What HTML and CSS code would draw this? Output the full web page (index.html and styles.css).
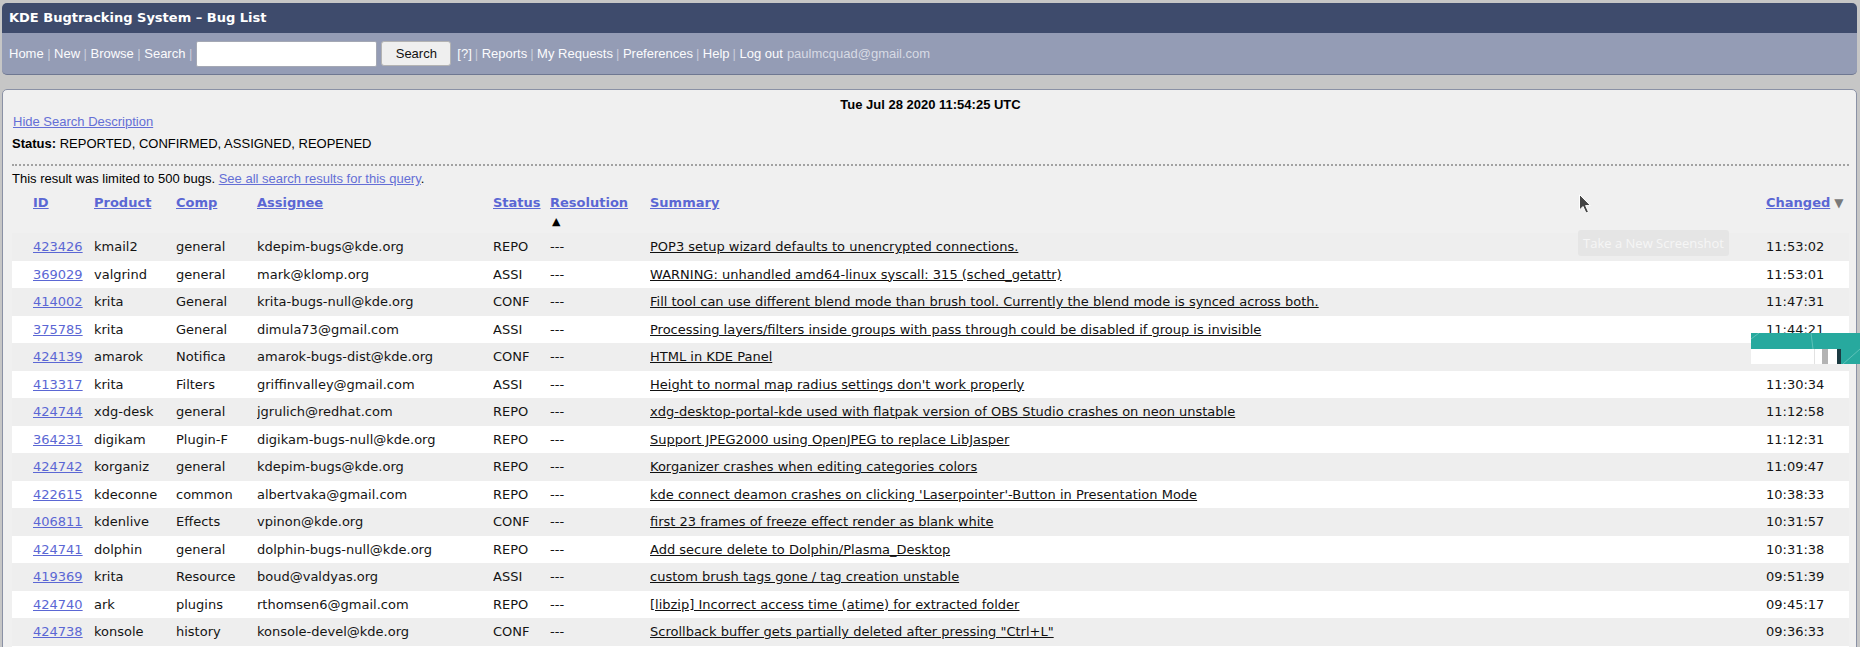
FILE: index.html
```html
<!DOCTYPE html>
<html lang="en">
<head>
<meta charset="utf-8">
<title>KDE Bugtracking System – Bug List</title>
<link rel="stylesheet" href="styles.css">
</head>
<body>
<div class="header">
  <div class="titlebar">KDE Bugtracking System – Bug List</div>
  <div class="navbar">
    <a class="nav-link">Home</a><span class="sep">|</span>
    <a class="nav-link">New</a><span class="sep">|</span>
    <a class="nav-link">Browse</a><span class="sep">|</span>
    <a class="nav-link">Search</a><span class="sep sep-last">|</span>
    <input class="quicksearch" type="text" aria-label="Quick search">
    <button class="search-btn" type="button">Search</button>
    <a class="nav-link">[?]</a><span class="sep sep-tight">|</span>
    <a class="nav-link">Reports</a><span class="sep sep-tight">|</span>
    <a class="nav-link">My Requests</a><span class="sep sep-tight">|</span>
    <a class="nav-link">Preferences</a><span class="sep sep-tight">|</span>
    <a class="nav-link">Help</a><span class="sep sep-tight">|</span>
    <a class="nav-link">Log out</a><span class="email">paulmcquad@gmail.com</span>
  </div>
</div>

<div class="content">
  <div class="timestamp">Tue Jul 28 2020 11:54:25 UTC</div>
  <div class="desc-toggle"><a class="link">Hide Search Description</a></div>
  <div class="status"><b>Status:</b> REPORTED, CONFIRMED, ASSIGNED, REOPENED</div>
  <div class="dots"></div>
  <div class="limit">This result was limited to 500 bugs. <a class="link">See all search results for this query</a>.</div>

  <table class="buglist">
    <colgroup>
      <col class="c-id"><col class="c-prod"><col class="c-comp"><col class="c-assignee"><col class="c-status"><col class="c-res"><col class="c-summary"><col class="c-changed">
    </colgroup>
    <thead>
      <tr>
        <th class="first"><a class="hlink">ID</a></th>
        <th><a class="hlink">Product</a></th>
        <th><a class="hlink">Comp</a></th>
        <th><a class="hlink">Assignee</a></th>
        <th><a class="hlink">Status</a></th>
        <th><a class="hlink">Resolution</a><span class="sort-up">▲</span></th>
        <th><a class="hlink">Summary</a></th>
        <th><a class="hlink">Changed</a><span class="sort-down">▼</span></th>
      </tr>
    </thead>
    <tbody>
      <tr class="odd"><td class="first"><a class="bid">423426</a></td><td>kmail2</td><td>general</td><td>kdepim-bugs@kde.org</td><td>REPO</td><td>---</td><td><a class="sum">POP3 setup wizard defaults to unencrypted connections.</a></td><td>11:53:02</td></tr>
      <tr class="even"><td class="first"><a class="bid">369029</a></td><td>valgrind</td><td>general</td><td>mark@klomp.org</td><td>ASSI</td><td>---</td><td><a class="sum">WARNING: unhandled amd64-linux syscall: 315 (sched_getattr)</a></td><td>11:53:01</td></tr>
      <tr class="odd"><td class="first"><a class="bid">414002</a></td><td>krita</td><td>General</td><td>krita-bugs-null@kde.org</td><td>CONF</td><td>---</td><td><a class="sum">Fill tool can use different blend mode than brush tool. Currently the blend mode is synced across both.</a></td><td>11:47:31</td></tr>
      <tr class="even"><td class="first"><a class="bid">375785</a></td><td>krita</td><td>General</td><td>dimula73@gmail.com</td><td>ASSI</td><td>---</td><td><a class="sum">Processing layers/filters inside groups with pass through could be disabled if group is invisible</a></td><td>11:44:21</td></tr>
      <tr class="odd"><td class="first"><a class="bid">424139</a></td><td>amarok</td><td>Notifica</td><td>amarok-bugs-dist@kde.org</td><td>CONF</td><td>---</td><td><a class="sum">HTML in KDE Panel</a></td><td></td></tr>
      <tr class="even"><td class="first"><a class="bid">413317</a></td><td>krita</td><td>Filters</td><td>griffinvalley@gmail.com</td><td>ASSI</td><td>---</td><td><a class="sum">Height to normal map radius settings don't work properly</a></td><td>11:30:34</td></tr>
      <tr class="odd"><td class="first"><a class="bid">424744</a></td><td>xdg-desk</td><td>general</td><td>jgrulich@redhat.com</td><td>REPO</td><td>---</td><td><a class="sum">xdg-desktop-portal-kde used with flatpak version of OBS Studio crashes on neon unstable</a></td><td>11:12:58</td></tr>
      <tr class="even"><td class="first"><a class="bid">364231</a></td><td>digikam</td><td>Plugin-F</td><td>digikam-bugs-null@kde.org</td><td>REPO</td><td>---</td><td><a class="sum">Support JPEG2000 using OpenJPEG to replace LibJasper</a></td><td>11:12:31</td></tr>
      <tr class="odd"><td class="first"><a class="bid">424742</a></td><td>korganiz</td><td>general</td><td>kdepim-bugs@kde.org</td><td>REPO</td><td>---</td><td><a class="sum">Korganizer crashes when editing categories colors</a></td><td>11:09:47</td></tr>
      <tr class="even"><td class="first"><a class="bid">422615</a></td><td>kdeconne</td><td>common</td><td>albertvaka@gmail.com</td><td>REPO</td><td>---</td><td><a class="sum">kde connect deamon crashes on clicking 'Laserpointer'-Button in Presentation Mode</a></td><td>10:38:33</td></tr>
      <tr class="odd"><td class="first"><a class="bid">406811</a></td><td>kdenlive</td><td>Effects</td><td>vpinon@kde.org</td><td>CONF</td><td>---</td><td><a class="sum">first 23 frames of freeze effect render as blank white</a></td><td>10:31:57</td></tr>
      <tr class="even"><td class="first"><a class="bid">424741</a></td><td>dolphin</td><td>general</td><td>dolphin-bugs-null@kde.org</td><td>REPO</td><td>---</td><td><a class="sum">Add secure delete to Dolphin/Plasma_Desktop</a></td><td>10:31:38</td></tr>
      <tr class="odd"><td class="first"><a class="bid">419369</a></td><td>krita</td><td>Resource</td><td>boud@valdyas.org</td><td>ASSI</td><td>---</td><td><a class="sum">custom brush tags gone / tag creation unstable</a></td><td>09:51:39</td></tr>
      <tr class="even"><td class="first"><a class="bid">424740</a></td><td>ark</td><td>plugins</td><td>rthomsen6@gmail.com</td><td>REPO</td><td>---</td><td><a class="sum">[libzip] Incorrect access time (atime) for extracted folder</a></td><td>09:45:17</td></tr>
      <tr class="odd"><td class="first"><a class="bid">424738</a></td><td>konsole</td><td>history</td><td>konsole-devel@kde.org</td><td>CONF</td><td>---</td><td><a class="sum">Scrollback buffer gets partially deleted after pressing "Ctrl+L"</a></td><td>09:36:33</td></tr>
      <tr class="even"><td class="first"></td><td></td><td></td><td></td><td></td><td></td><td></td><td></td></tr>
    </tbody>
  </table>
</div>

<svg class="cursor" width="14" height="22" viewBox="0 0 14 22" aria-hidden="true">
  <path d="M1.5 1.5 L1.5 17 L5 13.5 L8 20 L10.5 19 L7.6 12.6 L12.5 12.6 Z" fill="#444" stroke="#fff" stroke-width="1"/>
</svg>
<div class="tooltip">Take a New Screenshot</div>
<svg class="widget" width="109" height="31" viewBox="0 0 109 31" aria-hidden="true">
  <rect x="0" y="0" width="109" height="16" fill="#27a99e"/>
  <rect x="0" y="16" width="86" height="15" fill="#ffffff"/>
  <rect x="63" y="16" width="1" height="15" fill="#e2e2e2"/>
  <rect x="71" y="16" width="6" height="15" fill="#b3b3b3"/>
  <rect x="86" y="16" width="4" height="15" fill="#1c3b42"/>
  <rect x="90" y="16" width="19" height="15" fill="#27a99e"/>
  <line x1="60" y1="0" x2="62" y2="16" stroke="#6cc8bf" stroke-width="0.8"/>
  <line x1="0" y1="6" x2="8" y2="0" stroke="#6cc8bf" stroke-width="0.8"/>
  <line x1="92" y1="31" x2="109" y2="16" stroke="#6cc8bf" stroke-width="0.8"/>
</svg>
</body>
</html>
```

FILE: styles.css
```css
html, body {
  margin: 0;
  padding: 0;
}

body {
  background: #c6c6c6;
  font-family: "Liberation Sans", Arial, sans-serif;
  font-size: 13px;
  color: #000;
  position: relative;
  min-height: 647px;
  overflow: hidden;
}

a {
  cursor: pointer;
}

/* ---------- header ---------- */
.header {
  margin: 3px 3px 0 2px;
}

.titlebar {
  background: #3e4b6c;
  color: #ffffff;
  font-family: "DejaVu Sans", Verdana, sans-serif;
  font-weight: bold;
  font-size: 13px;
  height: 30px;
  line-height: 30px;
  padding-left: 7px;
  border-radius: 5px 5px 0 0;
}

.navbar {
  background: #949cb5;
  height: 41px;
  border-bottom: 1px solid #6e7791;
  border-radius: 0 0 5px 5px;
  display: flex;
  align-items: center;
  padding-left: 7px;
  font-family: "Liberation Sans", Arial, sans-serif;
  font-size: 13px;
}

.nav-link {
  color: #fbfbfd;
  text-decoration: none;
}

.sep {
  color: #c9cddb;
  margin: 0 3.5px;
}

.sep-tight {
  margin: 0 3.5px 0 3px;
}

.sep-last {
  margin-right: 4px;
}

.email {
  color: #d7dae4;
  margin-left: 4px;
}

.quicksearch {
  box-sizing: border-box;
  width: 181px;
  height: 26px;
  margin: 0;
  border: 1px solid #a4a8b4;
  border-radius: 2px;
  background: #ffffff;
  padding: 0 4px;
  font: 13px "Liberation Sans", Arial, sans-serif;
}

.search-btn {
  box-sizing: border-box;
  width: 70px;
  height: 25px;
  margin: 0 6px 0 4px;
  border: 1px solid #b3b3b3;
  border-radius: 3px;
  background: #efefef;
  color: #111;
  font: 13px "Liberation Sans", Arial, sans-serif;
  padding: 0;
}

/* ---------- content ---------- */
.content {
  margin: 14px 3px 0 2px;
  background: #f0f0f0;
  border: 1px solid #8a91a5;
  border-radius: 5px 5px 0 0;
  padding: 6px 7px 0 9px;
  min-height: 600px;
}

.timestamp {
  text-align: center;
  font-weight: bold;
  line-height: 17px;
}

.desc-toggle {
  line-height: 17px;
  padding-left: 1px;
}

.link {
  color: #646fd6;
  text-decoration: underline;
}

.status {
  line-height: 17px;
  margin-top: 5px;
}

.dots {
  margin: 12px 0 0 0;
  border-top: 2px dotted #a2a2a2;
  height: 0;
}

.limit {
  line-height: 17px;
  margin-top: 4px;
}

/* ---------- bug table ---------- */
.buglist {
  border-collapse: collapse;
  table-layout: fixed;
  width: 1837px;
  font-family: "DejaVu Sans", Verdana, sans-serif;
  font-size: 13px;
  color: #141414;
}

.c-id { width: 82px; }
.c-prod { width: 82px; }
.c-comp { width: 81px; }
.c-assignee { width: 236px; }
.c-status { width: 57px; }
.c-res { width: 100px; }
.c-summary { width: 1116px; }
.c-changed { width: 83px; }

.buglist th {
  text-align: left;
  vertical-align: top;
  padding: 8px 0 2px 0;
  line-height: 16px;
  white-space: nowrap;
  font-weight: bold;
}

.buglist th.first,
.buglist td.first {
  padding-left: 21px;
}

.hlink {
  color: #5b67d4;
  text-decoration: underline;
}

.sort-up {
  display: block;
  font-size: 11px;
  line-height: 19px;
  padding-top: 1px;
  color: #000;
  padding-left: 2px;
}

.sort-down {
  color: #7a7a7a;
  font-size: 12px;
  margin-left: 4px;
}

.buglist tbody tr {
  height: 27.5px;
}

.buglist td {
  padding: 0;
  white-space: nowrap;
  overflow: hidden;
  vertical-align: middle;
}

.buglist tr.odd td {
  background: #eeeeee;
}

.buglist tr.even td {
  background: #ffffff;
}

.bid {
  color: #5b67d4;
  text-decoration: underline;
}

.sum {
  color: #111;
  text-decoration: underline;
}

/* ---------- overlays (screenshot tool artefacts) ---------- */
.cursor {
  position: absolute;
  left: 1578px;
  top: 193px;
}

.tooltip {
  position: absolute;
  left: 1578px;
  top: 230px;
  width: 151px;
  height: 26px;
  box-sizing: border-box;
  background: #e5e5e5;
  border-radius: 3px;
  color: #f6f6f6;
  font-family: "Open Sans", "Noto Sans", sans-serif;
  font-size: 13px;
  line-height: 26px;
  text-align: center;
}

.widget {
  position: absolute;
  left: 1751px;
  top: 333px;
}
```
